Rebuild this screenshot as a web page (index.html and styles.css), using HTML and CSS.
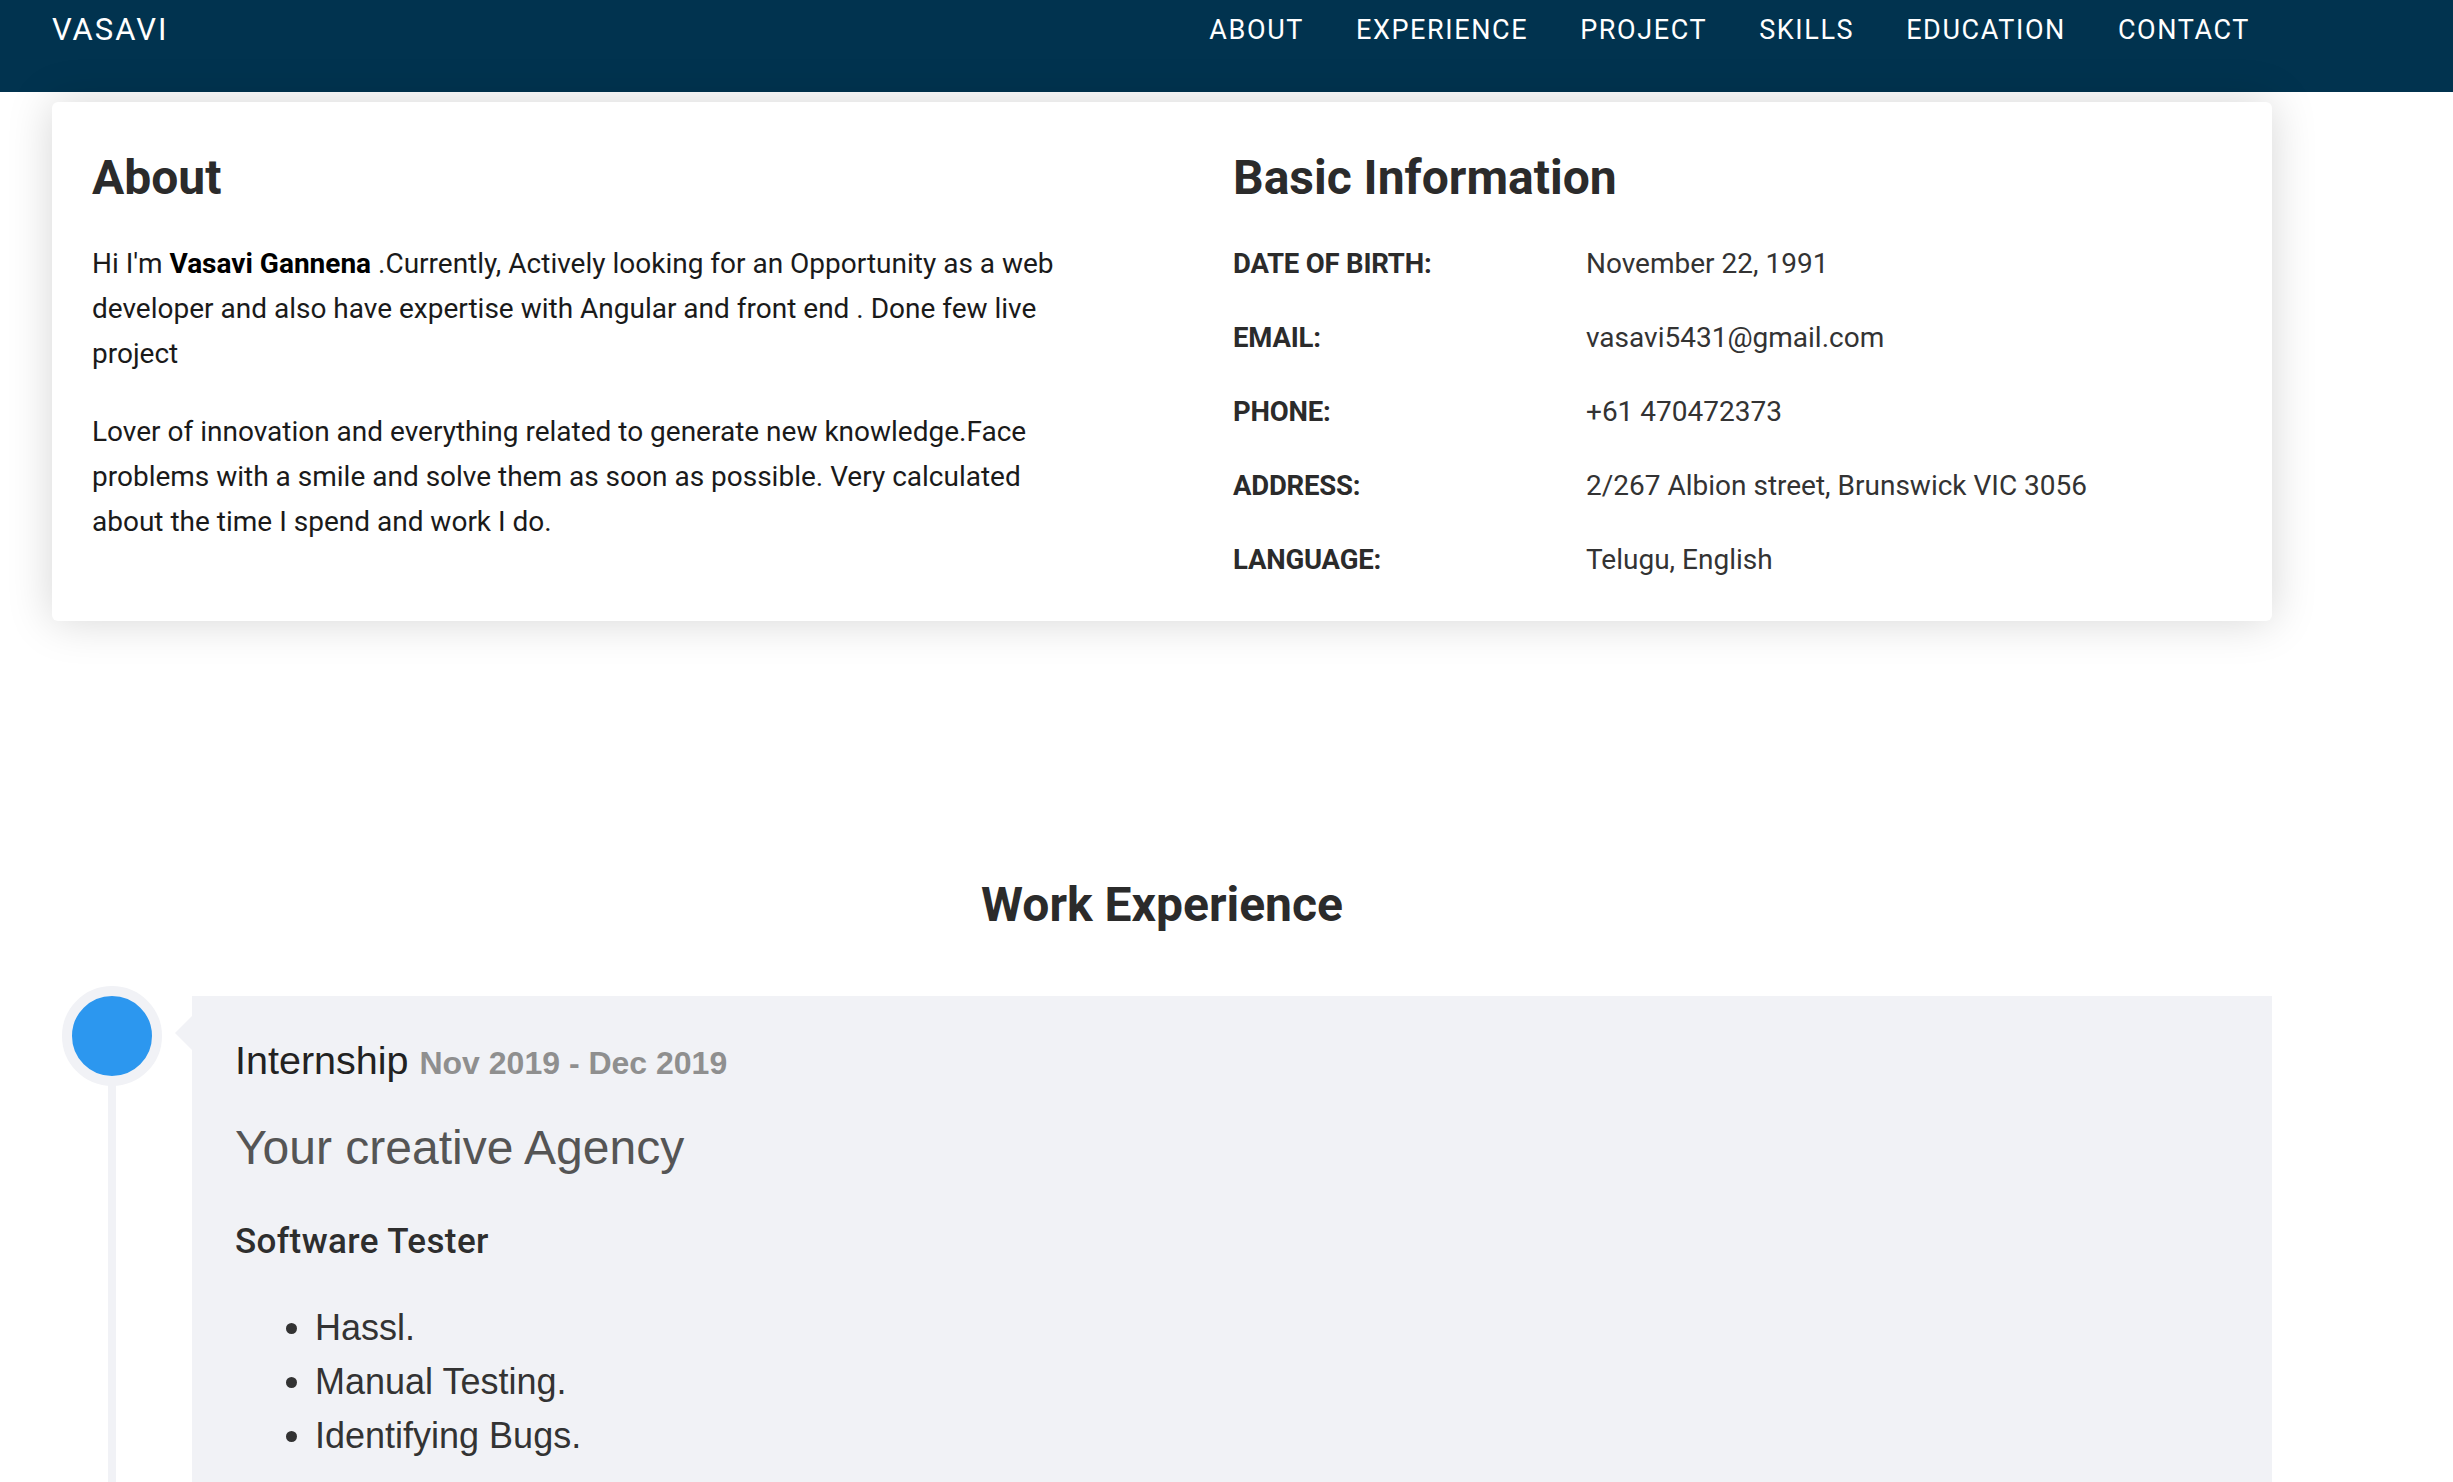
FILE: index.html
```html
<!DOCTYPE html>
<html lang="en">
<head>
<meta charset="utf-8">
<title>Vasavi</title>
<link rel="stylesheet" href="styles.css">
</head>
<body>
<header class="navbar">
  <div class="navbar-inner">
    <a class="brand" href="#">VASAVI</a>
    <nav class="nav">
      <a href="#about">ABOUT</a>
      <a href="#experience">EXPERIENCE</a>
      <a href="#project">PROJECT</a>
      <a href="#skills">SKILLS</a>
      <a href="#education">EDUCATION</a>
      <a href="#contact">CONTACT</a>
    </nav>
  </div>
</header>

<main class="container">
  <section class="about-card" id="about">
    <div class="about-col">
      <h2 class="section-title">About</h2>
      <p>Hi I'm <strong>Vasavi Gannena</strong> .Currently, Actively looking for an Opportunity as a web developer and also have expertise with Angular and front end . Done few live project</p>
      <p>Lover of innovation and everything related to generate new knowledge.Face problems with a smile and solve them as soon as possible. Very calculated about the time I spend and work I do.</p>
    </div>
    <div class="info-col">
      <h2 class="section-title">Basic Information</h2>
      <div class="info-row"><span class="info-label">DATE OF BIRTH:</span><span class="info-value">November 22, 1991</span></div>
      <div class="info-row"><span class="info-label">EMAIL:</span><span class="info-value">vasavi5431@gmail.com</span></div>
      <div class="info-row"><span class="info-label">PHONE:</span><span class="info-value">+61 470472373</span></div>
      <div class="info-row"><span class="info-label">ADDRESS:</span><span class="info-value">2/267 Albion street, Brunswick VIC 3056</span></div>
      <div class="info-row"><span class="info-label">LANGUAGE:</span><span class="info-value">Telugu, English</span></div>
    </div>
  </section>

  <section class="experience" id="experience">
    <h2 class="center-title">Work Experience</h2>
    <div class="timeline-item">
      <div class="marker">
        <span class="dot"></span>
        <span class="line"></span>
      </div>
      <div class="exp-card">
        <h3 class="job-title">Internship <span class="job-date">Nov 2019 - Dec 2019</span></h3>
        <h4 class="company">Your creative Agency</h4>
        <h5 class="role">Software Tester</h5>
        <ul class="duties">
          <li>Hassl.</li>
          <li>Manual Testing.</li>
          <li>Identifying Bugs.</li>
        </ul>
      </div>
    </div>
  </section>
</main>
</body>
</html>
```

FILE: styles.css
```css
* { box-sizing: border-box; }

html, body {
  margin: 0;
  padding: 0;
  background: #ffffff;
}

body {
  font-family: Roboto, "Liberation Sans", Arial, sans-serif;
  color: #212121;
}

a { text-decoration: none; }

/* ---------- navbar ---------- */
.navbar {
  background: #01334f;
  height: 92px;
}

.navbar-inner {
  width: 2220px;
  margin-left: 52px;
  padding-top: 10px;
  padding-right: 22px;
  display: flex;
  justify-content: space-between;
  align-items: flex-start;
}

.brand {
  color: #ffffff;
  font-size: 31px;
  line-height: 40px;
  letter-spacing: 2px;
}

.nav {
  display: flex;
  gap: 52px;
}

.nav a {
  color: #ffffff;
  font-size: 27px;
  line-height: 40px;
  letter-spacing: 1.6px;
}

/* ---------- container ---------- */
.container {
  width: 2220px;
  margin-left: 52px;
}

/* ---------- about card ---------- */
.about-card {
  margin-top: 10px;
  background: #ffffff;
  border-radius: 6px;
  box-shadow: 0 0 45px rgba(0, 0, 0, 0.17);
  padding: 48px 40px 39px 40px;
  display: grid;
  grid-template-columns: 985px 1fr;
  column-gap: 156px;
}

.section-title {
  margin: 0 0 34px 0;
  font-size: 48px;
  line-height: 1.18;
  font-weight: 700;
  color: #2b2b2b;
}

.about-col p {
  margin: 0 0 33px 0;
  font-size: 28px;
  line-height: 45px;
  color: #1a1a1a;
}

.about-col strong {
  font-weight: 700;
  color: #000;
}

.info-row {
  display: grid;
  grid-template-columns: 353px 1fr;
  font-size: 28px;
  line-height: 45px;
  margin-bottom: 29px;
}

.info-row:last-child { margin-bottom: 0; }

.info-label {
  font-size: 27.5px;
  font-weight: 700;
  color: #2b2b2b;
  letter-spacing: -0.2px;
}

.info-value {
  color: #333333;
}

/* ---------- experience ---------- */
.experience {
  padding-top: 256px;
}

.center-title {
  margin: 0 0 64px 0;
  text-align: center;
  font-size: 48px;
  line-height: 1.16;
  font-weight: 700;
  color: #2b2b2b;
}

.timeline-item {
  display: grid;
  grid-template-columns: 120px 1fr;
  column-gap: 20px;
}

.marker {
  display: flex;
  flex-direction: column;
  align-items: center;
}

.dot {
  display: block;
  width: 100px;
  height: 100px;
  margin-top: -10px;
  border-radius: 50%;
  background: #2c97ef;
  border: 10px solid #f1f2f6;
}

.line {
  display: block;
  width: 8px;
  flex: 1;
  margin-top: -2px;
  background: #f1f2f6;
}

.exp-card {
  position: relative;
  background: #f1f2f6;
  padding: 41px 43px 70px 43px;
  font-family: "Liberation Sans", Arial, sans-serif;
}

.exp-card::before {
  content: "";
  position: absolute;
  left: -17px;
  top: 20px;
  border-top: 17.5px solid transparent;
  border-bottom: 17.5px solid transparent;
  border-right: 17px solid #f1f2f6;
}

.job-title {
  margin: 0;
  font-size: 39.5px;
  line-height: 1.2;
  font-weight: 400;
  color: #222222;
}

.job-date {
  font-size: 32px;
  font-weight: 700;
  color: #8f8f8f;
}

.company {
  margin: 34px 0 0 0;
  font-size: 48px;
  line-height: 1.2;
  font-weight: 400;
  color: #555555;
}

.role {
  margin: 45px 0 0 0;
  font-family: Roboto, "Liberation Sans", sans-serif;
  font-size: 35px;
  line-height: 1.2;
  font-weight: 500;
  letter-spacing: 0.4px;
  color: #2e2e2e;
}

.duties {
  margin: 38px 0 0 0;
  padding-left: 80px;
  font-size: 36px;
  line-height: 54px;
  color: #333333;
}
```
